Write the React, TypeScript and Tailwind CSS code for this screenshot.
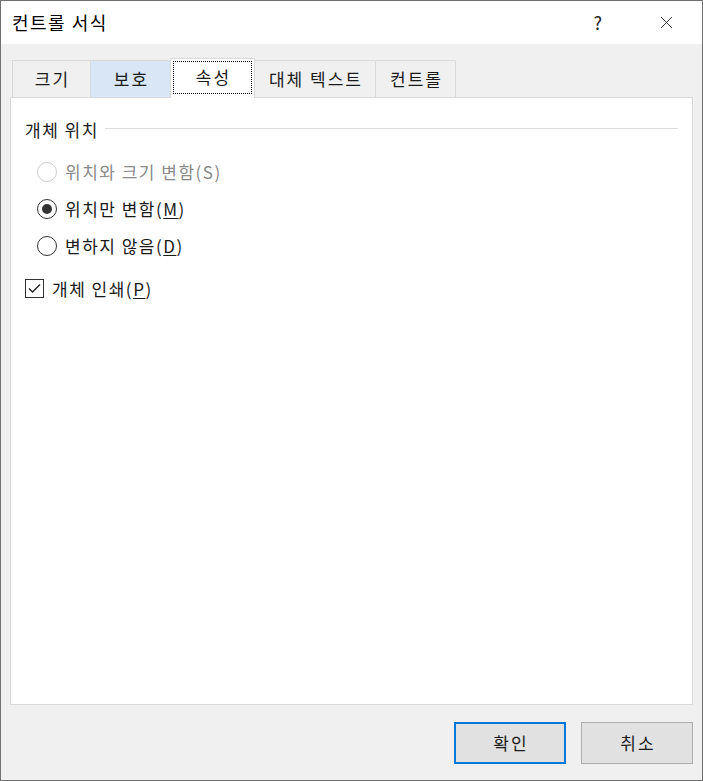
import { X } from "lucide-react";

const font = { fontFamily: '"Noto Sans CJK KR", "Noto Sans", sans-serif' };

function Radio({ checked, disabled }: { checked?: boolean; disabled?: boolean }) {
  return (
    <span
      className={`flex h-[20px] w-[20px] shrink-0 items-center justify-center rounded-full border bg-white ${
        disabled ? "border-[#cccccc]" : "border-[#333333]"
      }`}
    >
      {checked && <span className="h-[10px] w-[10px] rounded-full bg-[#333333]" />}
    </span>
  );
}

function Tab({ label, w, hover, active }: { label: string; w: string; hover?: boolean; active?: boolean }) {
  if (active) {
    return (
      <div className={`${w} relative z-10 -mb-px h-[40px] border border-b-0 border-[#d9d9d9] bg-white px-[2px] pt-[2px] pb-[4px]`}>
        <div className="flex h-full items-center justify-center border border-dotted border-black pb-[2px] pl-[2px] text-[17px] tracking-[2px]">
          {label}
        </div>
      </div>
    );
  }
  return (
    <div
      className={`${w} -ml-px flex h-[37px] items-center justify-center border border-b-0 border-[#d9d9d9] pb-[1px] pl-[2px] text-[17px] tracking-[2px] first:ml-0 ${
        hover ? "bg-[#d8e6f5]" : "bg-[#f0f0f0]"
      }`}
    >
      {label}
    </div>
  );
}

export default function App() {
  return (
    <div className="h-[781px] w-[703px] bg-white text-[#1a1a1a]" style={font}>
      <div className="flex h-full w-full flex-col border border-[#707070] bg-[#f0f0f0]">
        {/* title bar */}
        <div className="flex h-[43px] shrink-0 items-center bg-white pl-[11px]">
          <span className="text-[18px] tracking-[1.5px] text-black">컨트롤 서식</span>
          <span className="ml-auto mr-[54px] text-[18px] text-[#222]">?</span>
          <X className="mr-[25px] h-[21px] w-[21px]" strokeWidth={1} />
        </div>

        {/* tabs */}
        <div className="flex h-[53px] shrink-0 items-end pl-[11px]">
          <Tab label="크기" w="w-[79px]" />
          <Tab label="보호" w="w-[81px]" hover />
          <Tab label="속성" w="w-[85px] -ml-px" active />
          <Tab label="대체 텍스트" w="w-[122px]" />
          <Tab label="컨트롤" w="w-[81px]" />
        </div>

        {/* page */}
        <div className="mx-[9px] h-[608px] shrink-0 border border-[#d9d9d9] bg-white px-[14px] pt-[19px] text-[17px] tracking-[1.5px]">
          <div className="flex items-center">
            <span>개체 위치</span>
            <div className="ml-[6px] mt-[-2px] h-px flex-1 bg-[#dcdcdc]" />
          </div>
          <div className="mt-[19px] flex flex-col gap-[17px] pl-[12px]">
            <div className="flex h-[20px] items-center gap-[8px]">
              <Radio disabled />
              <span className="text-[#8a8a8a]">위치와 크기 변함(S)</span>
            </div>
            <div className="flex h-[20px] items-center gap-[8px]">
              <Radio checked />
              <span>
                위치만 변함(<span className="underline underline-offset-2">M</span>)
              </span>
            </div>
            <div className="flex h-[20px] items-center gap-[8px]">
              <Radio />
              <span>
                변하지 않음(<span className="underline underline-offset-2">D</span>)
              </span>
            </div>
          </div>
          <div className="mt-[23px] flex h-[20px] items-center gap-[8px]">
            <span className="flex h-[19px] w-[19px] items-center justify-center border border-[#333333] bg-white">
              <svg width="15" height="15" viewBox="0 0 15 15" fill="none">
                <path d="M2 7.5 L5.5 11 L13 3.5" stroke="#222" strokeWidth="1.4" />
              </svg>
            </span>
            <span>
              개체 인쇄(<span className="underline underline-offset-2">P</span>)
            </span>
          </div>
        </div>

        {/* buttons */}
        <div className="flex flex-1 items-start justify-end gap-[15px] pr-[9px] pt-[17px]">
          <button className="flex h-[42px] w-[112px] items-center justify-center border-2 border-[#0078d7] bg-[#e1e1e1] pl-[2px] text-[17px] tracking-[2px]">
            확인
          </button>
          <button className="flex h-[42px] w-[112px] items-center justify-center border border-[#adadad] bg-[#e1e1e1] pl-[2px] text-[17px] tracking-[2px]">
            취소
          </button>
        </div>
      </div>
    </div>
  );
}
